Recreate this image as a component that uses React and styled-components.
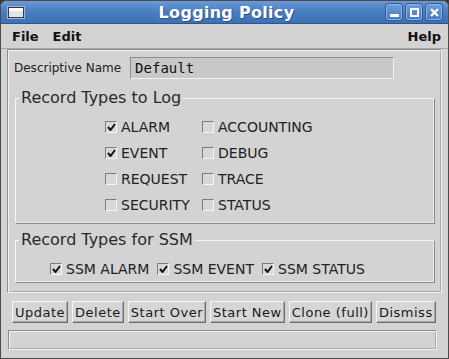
import React from 'react';
import styled, { createGlobalStyle } from 'styled-components';

const Global = createGlobalStyle`
  html, body { margin: 0; padding: 0; background: #3b3b3b; }
  body { font-family: 'DejaVu Sans', 'Liberation Sans', sans-serif; }
`;

const Frame = styled.div`
  width: 449px;
  height: 359px;
  box-sizing: border-box;
  background: #d3d3d3;
  border: 1px solid #4a4a4a;
  border-radius: 7px 7px 0 0;
  overflow: hidden;
  display: flex;
  flex-direction: column;
`;

const TitleBar = styled.div`
  height: 22px;
  flex: none;
  display: flex;
  align-items: center;
  padding: 0 5px 0 7px;
  background: linear-gradient(#6b9ad6, #4a7fc3 45%, #3d70b5);
  border-bottom: 1px solid #2d5690;
`;

const WinIcon = styled.div`
  width: 14px;
  height: 9px;
  border: 1px solid #3a3a3a;
  background: linear-gradient(#ffffff 0 3px, #e6e6e6 3px);
  box-shadow: 0 0 0 1px #9ab6dc;
`;

const Title = styled.div`
  flex: 1;
  text-align: center;
  color: #fff;
  font-weight: bold;
  font-size: 16px;
  letter-spacing: 0.3px;
  text-shadow: 1px 1px 0 #2c4f80;
  padding-left: 44px;
`;

const WinButtons = styled.div`
  display: flex;
  gap: 2px;
`;

const WinButton = styled.div`
  width: 16px;
  height: 16px;
  border: 1px solid #2f5a95;
  border-radius: 3px;
  background: linear-gradient(#6f9fdb, #4478bd);
  box-shadow: inset 0 0 0 1px #8cb3e6;
  display: flex;
  align-items: center;
  justify-content: center;
`;

const MenuBar = styled.div`
  height: 24px;
  flex: none;
  display: flex;
  align-items: center;
  padding: 0 7px 0 11px;
  font-size: 13px;
  font-weight: bold;
  color: #111;
  border-bottom: 1px solid #a6a6a6;
`;

const MenuItem = styled.span`
  margin-right: 14px;
  &:last-child { margin-right: 0; margin-left: auto; }
`;

const Panel = styled.div`
  margin: 0 6px 0 6px;
  height: 244px;
  flex: none;
  box-sizing: border-box;
  border: 1px solid #8d8d8d;
  border-right-color: #f2f2f2;
  border-bottom-color: #f2f2f2;
  box-shadow: inset 1px 1px 0 #f2f2f2, inset -1px -1px 0 #a9a9a9;
  padding: 7px 7px 0 6px;
  display: flex;
  flex-direction: column;
`;

const NameRow = styled.div`
  display: flex;
  align-items: center;
  gap: 9px;
  font-size: 12px;
  color: #222;
`;

const NameField = styled.div`
  width: 264px;
  height: 22px;
  box-sizing: border-box;
  border: 1px solid #8d8d8d;
  border-right-color: #f0f0f0;
  border-bottom-color: #f0f0f0;
  background: #c9c9c9;
  font-family: 'DejaVu Sans Mono', 'Liberation Mono', monospace;
  font-size: 14px;
  color: #111;
  padding: 0 0 0 4px;
  line-height: 20px;
`;

const Group = styled.fieldset`
  margin: ${p => p.$top}px 0 0 1px;
  width: 420px;
  box-sizing: border-box;
  height: ${p => p.$h}px;
  padding: 0;
  border: 1px solid #f4f4f4;
  border-right-color: #8a8a8a;
  border-bottom-color: #8a8a8a;
  box-shadow: inset -1px -1px 0 #ececec;
`;

const Legend = styled.legend`
  font-size: 16px;
  color: #2a2a2a;
  padding: 0 2px;
  margin-left: 3px;
  line-height: 16px;
`;

const Grid = styled.div`
  display: grid;
  grid-template-columns: 97px auto;
  row-gap: 8px;
  padding: 12px 0 0 89px;
`;

const Row = styled.div`
  display: flex;
  gap: 8px;
  padding: 12px 0 0 34px;
`;

const Check = styled.label`
  display: flex;
  align-items: center;
  gap: 4px;
  font-size: 14px;
  color: #222;
  height: 18px;
`;

const Box = styled.span`
  width: 12px;
  height: 12px;
  box-sizing: border-box;
  border: 1px solid #7d7d7d;
  border-right-color: #f6f6f6;
  border-bottom-color: #f6f6f6;
  background: #d8d8d8;
  display: flex;
  align-items: center;
  justify-content: center;
`;

const ButtonRow = styled.div`
  display: flex;
  gap: 4px;
  padding: 8px 0 0 11px;
`;

const Button = styled.button`
  height: 22px;
  padding: 0 2px;
  font-family: 'DejaVu Sans', 'Liberation Sans', sans-serif;
  font-size: 13px;
  letter-spacing: 0.5px;
  color: #1a1a1a;
  background: #d6d6d6;
  border: 1px solid #f6f6f6;
  border-right-color: #6d6d6d;
  border-bottom-color: #6d6d6d;
  box-shadow: inset -1px -1px 0 #a8a8a8;
`;

const Status = styled.div`
  margin: 7px 11px 0 7px;
  height: 18px;
  border: 1px solid #8d8d8d;
  border-right-color: #f2f2f2;
  border-bottom-color: #f2f2f2;
  box-shadow: inset 1px 1px 0 #f2f2f2, inset -1px -1px 0 #a9a9a9;
`;

const Tick = () => (
  <svg width="9" height="8" viewBox="0 0 9 8">
    <path d="M1 4 L3.5 7 L8 1" stroke="#111" strokeWidth="2" fill="none" />
  </svg>
);

const CheckItem = ({ label, checked }) => (
  <Check>
    <Box>{checked && <Tick />}</Box>
    {label}
  </Check>
);

const logTypes = [
  ['ALARM', true], ['ACCOUNTING', false],
  ['EVENT', true], ['DEBUG', false],
  ['REQUEST', false], ['TRACE', false],
  ['SECURITY', false], ['STATUS', false],
];

export default function App() {
  return (
    <Frame>
      <Global />
      <TitleBar>
        <WinIcon />
        <Title>Logging Policy</Title>
        <WinButtons>
          <WinButton>
            <svg width="9" height="9" viewBox="0 0 9 9"><rect x="0" y="6" width="9" height="3" fill="#fff" /></svg>
          </WinButton>
          <WinButton>
            <svg width="9" height="9" viewBox="0 0 9 9"><rect x="1" y="1" width="7" height="7" fill="none" stroke="#fff" strokeWidth="2" /></svg>
          </WinButton>
          <WinButton>
            <svg width="9" height="9" viewBox="0 0 9 9"><path d="M1 1 L8 8 M8 1 L1 8" stroke="#fff" strokeWidth="2.4" /></svg>
          </WinButton>
        </WinButtons>
      </TitleBar>
      <MenuBar>
        <MenuItem>File</MenuItem>
        <MenuItem>Edit</MenuItem>
        <MenuItem>Help</MenuItem>
      </MenuBar>
      <Panel>
        <NameRow>
          Descriptive Name
          <NameField>Default</NameField>
        </NameRow>
        <Group $top={11} $h={134}>
          <Legend>Record Types to Log</Legend>
          <Grid>
            {logTypes.map(([l, c]) => <CheckItem key={l} label={l} checked={c} />)}
          </Grid>
        </Group>
        <Group $top={8} $h={51}>
          <Legend>Record Types for SSM</Legend>
          <Row>
            <CheckItem label="SSM ALARM" checked />
            <CheckItem label="SSM EVENT" checked />
            <CheckItem label="SSM STATUS" checked />
          </Row>
        </Group>
      </Panel>
      <ButtonRow>
        {['Update', 'Delete', 'Start Over', 'Start New', 'Clone (full)', 'Dismiss'].map(b => (
          <Button key={b}>{b}</Button>
        ))}
      </ButtonRow>
      <Status />
    </Frame>
  );
}
